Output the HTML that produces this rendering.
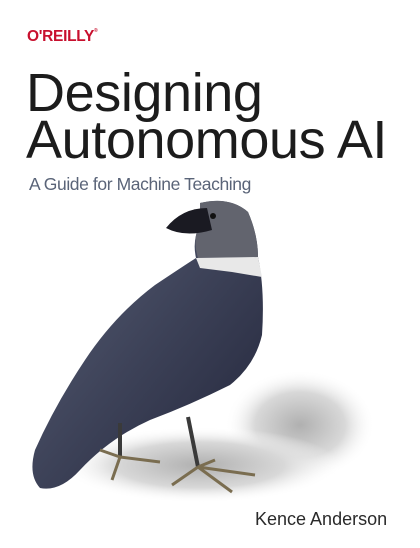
<!DOCTYPE html>
<html><head><meta charset="utf-8"><style>
html,body{margin:0;padding:0;background:#fff;}
body{width:420px;height:548px;position:relative;overflow:hidden;font-family:"Liberation Sans",sans-serif;}
.t{position:absolute;white-space:nowrap;}
</style></head><body>
<div class="t" style="left:27px;top:28px;font-size:15.5px;font-weight:bold;color:#c8102e;letter-spacing:-0.3px">O'REILLY<span style="font-size:5px;vertical-align:top">®</span></div>
<div class="t" style="left:26px;top:70px;font-size:54px;color:#1c1c1c;letter-spacing:-0.4px;line-height:47px">Designing<br>Autonomous AI</div>
<div class="t" style="left:29px;top:174px;font-size:17.5px;color:#5a6478;letter-spacing:-0.4px">A Guide for Machine Teaching</div>
<svg style="position:absolute;left:0;top:0" width="420" height="548">
<defs>
<radialGradient id="sh" cx="0.5" cy="0.5" r="0.5"><stop offset="0" stop-color="#b0b0b0"/><stop offset="0.6" stop-color="#d8d8d8"/><stop offset="1" stop-color="#fff" stop-opacity="0"/></radialGradient>
<linearGradient id="bd" x1="0" y1="0" x2="1" y2="1"><stop offset="0" stop-color="#5a6178"/><stop offset="0.5" stop-color="#3d4258"/><stop offset="1" stop-color="#22253a"/></linearGradient>
</defs>
<ellipse cx="300" cy="425" rx="75" ry="55" fill="url(#sh)"/>
<ellipse cx="200" cy="465" rx="140" ry="38" fill="url(#sh)"/>
<path d="M200,203 Q230,196 248,212 Q258,235 258,257 Q265,290 262,335 Q255,365 230,385 Q190,405 150,420 Q110,438 80,470 Q60,492 40,488 Q28,475 35,450 Q55,405 85,360 Q115,315 155,285 Q185,265 196,258 Q192,240 200,225 Z" fill="url(#bd)"/>
<path d="M200,203 Q230,196 248,212 Q258,235 258,257 L198,258 Q192,240 200,222 Z" fill="#62646e"/>
<path d="M196,258 L258,257 L262,277 L232,272 L200,268 Z" fill="#e8e8e8"/>
<path d="M207,208 Q182,208 166,228 Q185,238 212,230 Z" fill="#1a1a22"/>
<circle cx="213" cy="216" r="3" fill="#111"/>
<g stroke="#3a3a3a" stroke-width="4" fill="none">
<path d="M120,423 L120,457"/><path d="M188,417 L198,467"/>
</g>
<g stroke="#7a6d50" stroke-width="3" fill="none">
<path d="M120,457 L100,450 M120,457 L160,462 M120,457 L112,480"/>
<path d="M198,467 L172,485 M198,467 L255,475 M198,467 L232,492 M198,467 L215,460"/>
</g>
</svg>
<div class="t" style="left:255px;top:509px;font-size:18px;color:#2a2a2a">Kence Anderson</div>
</body></html>
